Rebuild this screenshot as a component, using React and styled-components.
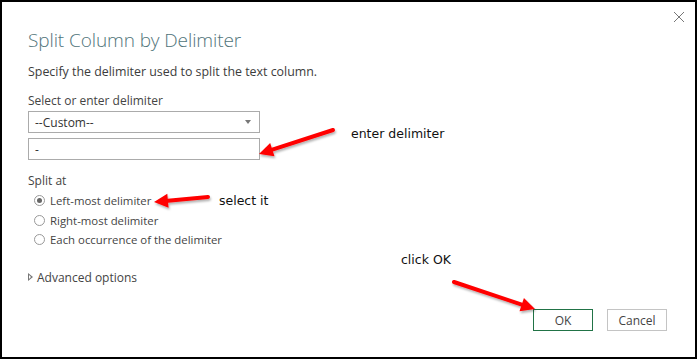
import React from 'react';
import styled, { createGlobalStyle } from 'styled-components';

const GlobalStyle = createGlobalStyle`
  html, body {
    margin: 0;
    padding: 0;
    background: #fff;
  }
`;

const Dialog = styled.div`
  position: relative;
  box-sizing: border-box;
  width: 697px;
  height: 359px;
  border: 2px solid #000;
  background: #fff;
  font-family: 'Segoe UI', 'Open Sans', sans-serif;
  color: #444;
  display: flex;
  flex-direction: column;
  padding: 24px 28px 26px 26px;
`;

const Close = styled.div`
  position: absolute;
  top: 6px;
  right: 8px;
  width: 16px;
  height: 16px;
`;

const Title = styled.h1`
  margin: 0;
  font-weight: 300;
  font-size: 19px;
  letter-spacing: -0.1px;
  color: #51747a;
  line-height: 28px;
`;

const Subtitle = styled.p`
  margin: 9px 0 0;
  font-size: 12.4px;
  color: #3c3c3c;
  line-height: 18px;
`;

const Label = styled.div`
  font-size: 12px;
  color: #444;
  line-height: 16px;
  margin-top: ${p => p.$mt || 0}px;
`;

const Field = styled.div`
  box-sizing: border-box;
  width: 232px;
  height: ${p => p.$h || 22}px;
  border: 1px solid #ababab;
  display: flex;
  align-items: center;
  justify-content: space-between;
  padding: 0 8px 0 6px;
  font-size: 12px;
  color: #333;
  margin-top: ${p => p.$mt || 0}px;
`;

const Caret = styled.span`
  width: 0;
  height: 0;
  border-left: 3px solid transparent;
  border-right: 3px solid transparent;
  border-top: 4px solid #777;
`;

const RadioList = styled.div`
  display: flex;
  flex-direction: column;
  gap: 2px;
  margin-top: 3px;
  padding-left: 6px;
`;

const RadioRow = styled.label`
  display: flex;
  align-items: center;
  gap: 5px;
  font-size: 11.4px;
  color: #444;
  height: 17.5px;
`;

const RadioDot = styled.span`
  box-sizing: border-box;
  width: 11px;
  height: 11px;
  border-radius: 50%;
  border: 1px solid #999;
  background: #fff;
  display: flex;
  align-items: center;
  justify-content: center;
  &::after {
    content: '';
    width: 5px;
    height: 5px;
    border-radius: 50%;
    background: ${p => (p.$on ? '#666' : 'transparent')};
  }
`;

const Advanced = styled.div`
  display: flex;
  align-items: center;
  gap: 4px;
  margin-top: 20px;
  font-size: 12px;
  color: #444;
`;

const Triangle = styled.span`
  width: 0;
  height: 0;
  border-top: 4px solid transparent;
  border-bottom: 4px solid transparent;
  border-left: 5px solid #777;
  position: relative;
  &::after {
    content: '';
    position: absolute;
    left: -4px;
    top: -2px;
    border-top: 2px solid transparent;
    border-bottom: 2px solid transparent;
    border-left: 2.5px solid #fff;
  }
`;

const Footer = styled.div`
  margin-top: auto;
  display: flex;
  justify-content: flex-end;
  gap: 14px;
`;

const Button = styled.button`
  box-sizing: border-box;
  width: 60px;
  height: 22px;
  background: #fff;
  border: 1px solid ${p => (p.$primary ? '#217346' : '#c4c4c4')};
  font-family: inherit;
  font-size: 12px;
  color: #444;
  padding: 0;
`;

const Note = styled.div`
  position: absolute;
  left: ${p => p.$x}px;
  top: ${p => p.$y}px;
  font-family: 'DejaVu Sans', Verdana, sans-serif;
  font-size: 12.5px;
  color: #111;
  white-space: nowrap;
`;

const Arrows = styled.svg`
  position: absolute;
  left: 0;
  top: 0;
  pointer-events: none;
`;

const Arrow = ({ x1, y1, x2, y2 }) => {
  const a = Math.atan2(y2 - y1, x2 - x1);
  const len = 14;
  const w = 7;
  const bx = x2 - Math.cos(a) * len;
  const by = y2 - Math.sin(a) * len;
  const px = -Math.sin(a) * w;
  const py = Math.cos(a) * w;
  return (
    <g filter="url(#shadow)">
      <line x1={x1} y1={y1} x2={bx} y2={by} stroke="#f00" strokeWidth="4" strokeLinecap="round" />
      <polygon points={`${x2},${y2} ${bx + px},${by + py} ${bx - px},${by - py}`} fill="#f00" />
    </g>
  );
};

const App = () => (
  <>
    <GlobalStyle />
    <Dialog>
      <Close>
        <svg width="16" height="16" viewBox="0 0 16 16">
          <path d="M3 3 L13 13 M13 3 L3 13" stroke="#777" strokeWidth="1" />
        </svg>
      </Close>
      <Title>Split Column by Delimiter</Title>
      <Subtitle>Specify the delimiter used to split the text column.</Subtitle>
      <Label $mt={12}>Select or enter delimiter</Label>
      <Field $mt={2}>
        <span>--Custom--</span>
        <Caret />
      </Field>
      <Field $mt={5} $h={22}>
        <span>-</span>
      </Field>
      <Label $mt={13}>Split at</Label>
      <RadioList>
        <RadioRow><RadioDot $on />Left-most delimiter</RadioRow>
        <RadioRow><RadioDot />Right-most delimiter</RadioRow>
        <RadioRow><RadioDot />Each occurrence of the delimiter</RadioRow>
      </RadioList>
      <Advanced><Triangle />Advanced options</Advanced>
      <Footer>
        <Button $primary>OK</Button>
        <Button>Cancel</Button>
      </Footer>

      <Note $x={349} $y={124}>enter delimiter</Note>
      <Note $x={217} $y={191}>select it</Note>
      <Note $x={399} $y={250}>click OK</Note>

      <Arrows width="697" height="359">
        <defs>
          <filter id="shadow" x="-20%" y="-50%" width="140%" height="200%">
            <feDropShadow dx="1" dy="2" stdDeviation="1.2" floodColor="#000" floodOpacity="0.3" />
          </filter>
        </defs>
        <Arrow x1={331} y1={128} x2={257} y2={152} />
        <Arrow x1={206} y1={195} x2={152} y2={200} />
        <Arrow x1={452} y1={280} x2={533} y2={307} />
      </Arrows>
    </Dialog>
  </>
);

export default App;
